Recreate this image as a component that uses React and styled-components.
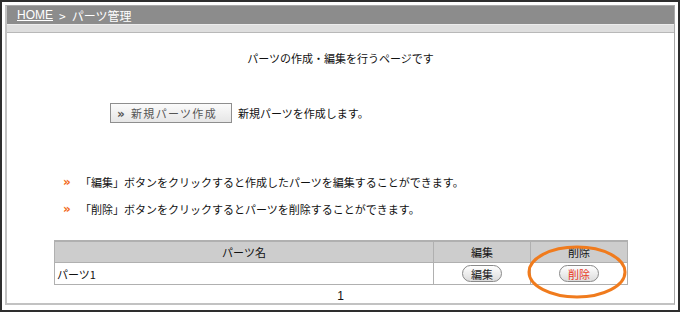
import styled, { createGlobalStyle } from "styled-components";

const Global = createGlobalStyle`
  html, body { margin: 0; padding: 0; background: #fff; }
  body {
    font-family: "Noto Sans CJK JP", "Noto Sans", sans-serif;
    color: #111;
  }
`;

const Frame = styled.div`
  width: 680px;
  height: 312px;
  box-sizing: border-box;
  border: 2px solid #2e2e2e;
  padding: 3px 3px 5px 3px;
  display: flex;
`;

const Panel = styled.div`
  flex: 1;
  display: flex;
  flex-direction: column;
  border: 1px solid #a9a9a9;
  border-bottom: 2px solid #c2c2c2;
  border-left: 2px solid #c2c2c2;
`;

const Breadcrumb = styled.div`
  height: 19px;
  background: #8c8c8c;
  color: #fff;
  font-size: 12px;
  display: flex;
  align-items: center;
  gap: 6px;
  padding-left: 10px;
  a {
    color: #fff;
    text-decoration: underline;
    font-family: "Liberation Sans", sans-serif;
  }
`;

const Strip = styled.div`
  height: 7px;
  background: #dedede;
  border-top: 1px solid #ececec;
  border-bottom: 1px solid #b8b8b8;
`;

const Body = styled.div`
  flex: 1;
  display: flex;
  flex-direction: column;
  font-size: 11px;
`;

const Title = styled.p`
  margin: 17px 0 0;
  text-align: center;
  line-height: 16px;
`;

const CreateRow = styled.div`
  display: flex;
  align-items: center;
  gap: 6px;
  margin: 37px 0 0 103px;
`;

const CreateButton = styled.button`
  width: 122px;
  height: 20px;
  border: 1px solid #8e8e8e;
  background: linear-gradient(#fbfbfb, #e6e6e6);
  color: #555;
  font-family: inherit;
  font-size: 11px;
  text-align: left;
  padding: 0 0 0 6px;
  letter-spacing: 1.3px;
  b {
    font-family: "DejaVu Sans", sans-serif;
    font-size: 12px;
    margin-right: 5px;
  }
`;

const Notes = styled.ul`
  list-style: none;
  margin: 51px 0 0 56px;
  padding: 0;
  display: flex;
  flex-direction: column;
  gap: 11px;
`;

const Note = styled.li`
  display: flex;
  align-items: center;
  gap: 5px;
  line-height: 16px;
  &::before {
    content: "»";
    color: #f26a1b;
    font-family: "DejaVu Sans", sans-serif;
    font-weight: bold;
    font-size: 12px;
    width: 12px;
  }
`;

const TableWrap = styled.div`
  position: relative;
  margin: 23px 0 0 47px;
  width: 574px;
`;

const Table = styled.table`
  width: 574px;
  border-collapse: collapse;
  font-size: 11px;
  th, td {
    border: 1px solid #b0b0b0;
    height: 20px;
    padding: 0 2px;
  }
  th {
    background: #cdcdcd;
    font-weight: normal;
    border-top: 2px solid #b0b0b0;
  }
  td { height: 21px; }
`;

const Cell = styled.td`
  text-align: ${(p) => (p.$center ? "center" : "left")};
`;

const Pill = styled.button`
  height: 17px;
  padding: 0 8px;
  border: 1px solid #8a8a8a;
  border-radius: 9px;
  background: linear-gradient(#ffffff, #dcdcdc);
  font-family: inherit;
  font-size: 11px;
  line-height: 14px;
  color: ${(p) => (p.$danger ? "#e8381d" : "#222")};
`;

const Pager = styled.div`
  text-align: center;
  font-family: "Liberation Sans", sans-serif;
  font-size: 12px;
  margin-top: 4px;
`;

const Highlight = styled.svg`
  position: absolute;
  right: -6px;
  top: 5px;
  overflow: visible;
`;

export default function App() {
  return (
    <>
      <Global />
      <Frame>
        <Panel>
          <Breadcrumb>
            <a>HOME</a>
            <span>&gt;</span>
            <span>パーツ管理</span>
          </Breadcrumb>
          <Strip />
          <Body>
            <Title>パーツの作成・編集を行うページです</Title>
            <CreateRow>
              <CreateButton>
                <b>»</b>新規パーツ作成
              </CreateButton>
              <span>新規パーツを作成します。</span>
            </CreateRow>
            <Notes>
              <Note>「編集」ボタンをクリックすると作成したパーツを編集することができます。</Note>
              <Note>「削除」ボタンをクリックするとパーツを削除することができます。</Note>
            </Notes>
            <TableWrap>
              <Table>
                <thead>
                  <tr>
                    <th style={{ width: 374 }}>パーツ名</th>
                    <th>編集</th>
                    <th>削除</th>
                  </tr>
                </thead>
                <tbody>
                  <tr>
                    <Cell>パーツ1</Cell>
                    <Cell $center>
                      <Pill>編集</Pill>
                    </Cell>
                    <Cell $center>
                      <Pill $danger>削除</Pill>
                    </Cell>
                  </tr>
                </tbody>
              </Table>
              <Highlight width="110" height="54" viewBox="0 0 110 54">
                <ellipse cx="53" cy="27" rx="48" ry="25" fill="none" stroke="#f07b1d" strokeWidth="3" />
              </Highlight>
            </TableWrap>
            <Pager>1</Pager>
          </Body>
        </Panel>
      </Frame>
    </>
  );
}
